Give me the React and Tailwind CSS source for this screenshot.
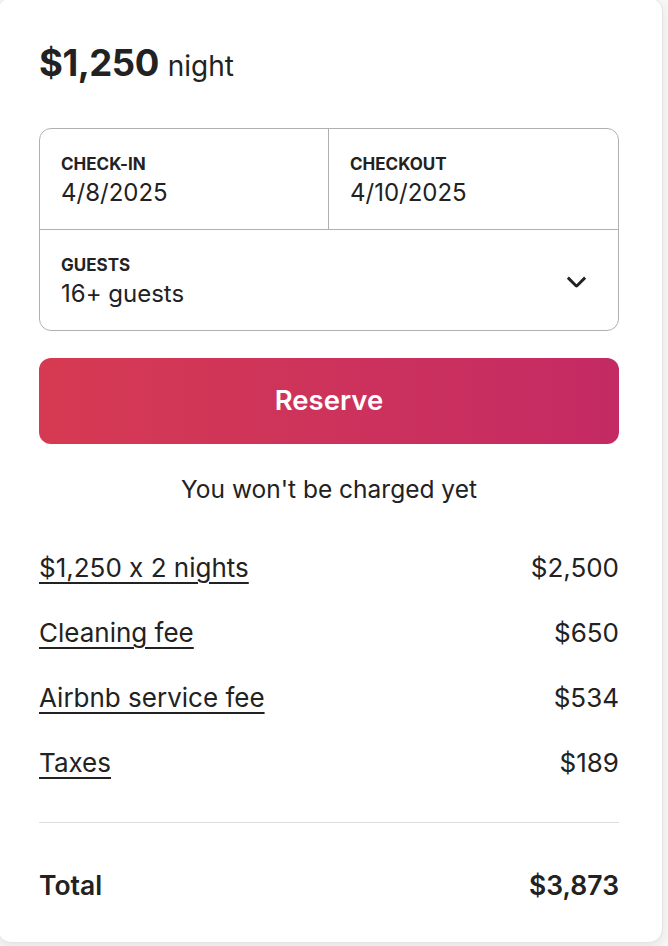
export default function App() {
  const lines = [
    { label: "$1,250 x 2 nights", amount: "$2,500" },
    { label: "Cleaning fee", amount: "$650" },
    { label: "Airbnb service fee", amount: "$534" },
    { label: "Taxes", amount: "$189" },
  ];

  return (
    <div className="min-h-screen overflow-hidden bg-[#f7f7f7] font-[Inter,'Noto_Sans',sans-serif] text-[#222222] [font-feature-settings:'calt'_0]">
      <div className="-ml-[3px] -mt-[3px] h-[946px] w-[666px] rounded-[14px] border border-[#e4e4e4] bg-white pl-[41px] pr-[43px] shadow-[0_4px_12px_rgba(0,0,0,0.08)]">
        <div className="flex h-[130px] items-baseline pt-[38px]">
          <span className="text-[36.5px] font-bold tracking-[-0.5px]">$1,250</span>
          <span className="ml-[9px] text-[28px]">night</span>
        </div>

        <div className="rounded-[12px] border border-[#b0b0b0]">
          <div className="grid h-[101px] grid-cols-2 border-b border-[#b0b0b0]">
            <div className="flex flex-col justify-center border-r border-[#b0b0b0] px-[21px] pt-[2px]">
              <span className="text-[17px] font-bold leading-[20px]">CHECK-IN</span>
              <span className="mt-[5px] text-[24px] leading-[28px]">4/8/2025</span>
            </div>
            <div className="flex flex-col justify-center px-[21px] pt-[2px]">
              <span className="text-[17px] font-bold leading-[20px]">CHECKOUT</span>
              <span className="mt-[5px] text-[24px] leading-[28px]">4/10/2025</span>
            </div>
          </div>
          <div className="flex h-[100px] items-center justify-between pl-[21px] pr-[30px]">
            <div className="flex flex-col pt-[2px]">
              <span className="text-[17px] font-bold leading-[20px]">GUESTS</span>
              <span className="mt-[5px] text-[24px] leading-[28px]">16+ guests</span>
            </div>
            <svg viewBox="0 0 32 32" className="h-[23px] w-[23px]" fill="none" stroke="#222222" strokeWidth="4">
              <path d="M28 12 16.7 23.3a1 1 0 0 1-1.4 0L4 12" />
            </svg>
          </div>
        </div>

        <button className="mt-[27px] flex h-[86px] w-full items-center justify-center rounded-[12px] bg-gradient-to-r from-[#d63a52] to-[#c42a63] text-[27.5px] font-semibold text-white">
          Reserve
        </button>

        <p className="mt-[30px] text-center text-[24.5px] leading-[30px]">You won't be charged yet</p>

        <div className="mt-[31px] flex flex-col">
          {lines.map((l) => (
            <div key={l.label} className="flex h-[65px] items-center justify-between text-[26px]">
              <span className="underline decoration-[1.5px] underline-offset-[5px]">{l.label}</span>
              <span>{l.amount}</span>
            </div>
          ))}
        </div>

        <div className="mt-[27px] border-t border-[#dddddd]" />

        <div className="flex h-[126px] items-center justify-between text-[26.5px] font-semibold">
          <span>Total</span>
          <span>$3,873</span>
        </div>
      </div>
    </div>
  );
}
